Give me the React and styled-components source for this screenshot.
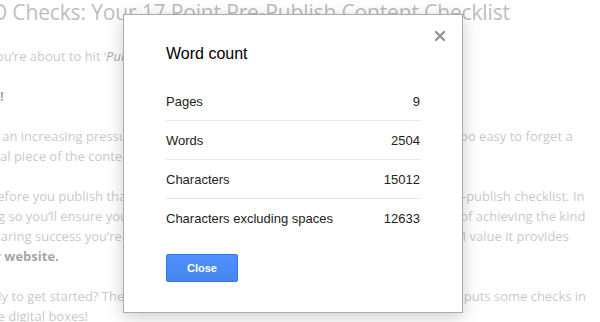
import React from 'react';
import styled, { createGlobalStyle } from 'styled-components';

const GlobalStyle = createGlobalStyle`
  html, body {
    margin: 0;
    padding: 0;
    background: #fff;
    overflow: hidden;
  }
`;

const Page = styled.div`
  position: relative;
  width: 600px;
  height: 322px;
  overflow: hidden;
`;

const Article = styled.main`
  margin-left: -29px;
  width: 680px;
  font-family: 'Open Sans', sans-serif;
  font-size: 13px;
  line-height: 20px;
  color: #919191;
`;

const Title = styled.h1`
  margin: -1px 0 21px -3px;
  font-family: 'Open Sans', sans-serif;
  font-size: 21px;
  font-weight: 400;
  letter-spacing: -0.15px;
  line-height: 26px;
  color: #7a7a7a;
  white-space: nowrap;
`;

const Para = styled.p`
  margin: 0 0 20px;
`;

const Line = styled.span`
  display: block;
  white-space: nowrap;
`;

const Strong = styled.b`
  font-weight: 700;
  color: #4b4b4b;
`;

const Em = styled.em`
  color: #555;
`;

const Overlay = styled.div`
  position: absolute;
  inset: 0;
  background: rgba(255, 255, 255, 0.5);
`;

const Dialog = styled.section`
  position: absolute;
  left: 123px;
  top: 14px;
  width: 254px;
  padding: 30px 42px;
  background: #fff;
  border: 1px solid #acacac;
  box-shadow: 0 4px 16px rgba(0, 0, 0, 0.2);
  font-family: 'Liberation Sans', Arial, sans-serif;
  color: #222;
`;

const DialogTitle = styled.h2`
  margin: 0 0 19px;
  font-size: 16px;
  font-weight: 400;
  line-height: 18px;
  color: #000;
`;

const CloseIcon = styled.button`
  position: absolute;
  top: 16px;
  right: 17px;
  width: 10px;
  height: 10px;
  padding: 0;
  border: none;
  background: none;
  cursor: pointer;
  display: flex;
`;

const Stats = styled.div`
  display: flex;
  flex-direction: column;
`;

const Row = styled.div`
  display: flex;
  justify-content: space-between;
  align-items: center;
  height: 38px;
  font-size: 13px;
  border-bottom: ${(p) => (p.$last ? 'none' : '1px solid #e5e5e5')};
`;

const Actions = styled.div`
  margin-top: 17px;
  display: flex;
`;

const Button = styled.button`
  min-width: 72px;
  height: 28px;
  padding: 0 8px;
  border: 1px solid #3079ed;
  border-radius: 2px;
  background-color: #4d90fe;
  background-image: linear-gradient(#4d90fe, #4787ed);
  color: #fff;
  font-family: 'Liberation Sans', Arial, sans-serif;
  font-size: 11px;
  font-weight: 700;
  cursor: pointer;
`;

const stats = [
  ['Pages', '9'],
  ['Words', '2504'],
  ['Characters', '15012'],
  ['Characters excluding spaces', '12633'],
];

const App = () => (
  <Page>
    <GlobalStyle />
    <Article>
      <Title>SEO Checks: Your 17 Point Pre-Publish Content Checklist</Title>
      <Para>
        <Line>So you’re about to hit ‘<Em>Publish</Em>’ on your latest blog post?</Line>
      </Para>
      <Para>
        <Line><Strong>Stop!</Strong></Line>
      </Para>
      <Para>
        <Line>With an increasing pressure to produce more content, much more often, it is all too easy to forget a</Line>
        <Line>crucial piece of the content puzzle before it goes live.</Line>
      </Para>
      <Para>
        <Line>So before you publish that next post, take a few minutes to work through our pre-publish checklist. In</Line>
        <Line>doing so you’ll ensure your content is always given the very best possible chance of achieving the kind</Line>
        <Line>of sharing success you’re hoping for, and can squeeze every drop of SEO and CRM value it provides</Line>
        <Line><Strong>your website.</Strong></Line>
      </Para>
      <Para>
        <Line>Ready to get started? Then grab a coffee, and let’s all work through the list as this puts some checks in</Line>
        <Line>those digital boxes!</Line>
      </Para>
    </Article>
    <Overlay />
    <Dialog role="dialog">
      <CloseIcon aria-label="Close">
        <svg width="10" height="10" viewBox="0 0 10 10">
          <path d="M1 1L9 9M9 1L1 9" stroke="#8f8f8f" strokeWidth="2.2" strokeLinecap="square" />
        </svg>
      </CloseIcon>
      <DialogTitle>Word count</DialogTitle>
      <Stats>
        {stats.map(([label, value], i) => (
          <Row key={label} $last={i === stats.length - 1}>
            <span>{label}</span>
            <span>{value}</span>
          </Row>
        ))}
      </Stats>
      <Actions>
        <Button>Close</Button>
      </Actions>
    </Dialog>
  </Page>
);

export default App;
